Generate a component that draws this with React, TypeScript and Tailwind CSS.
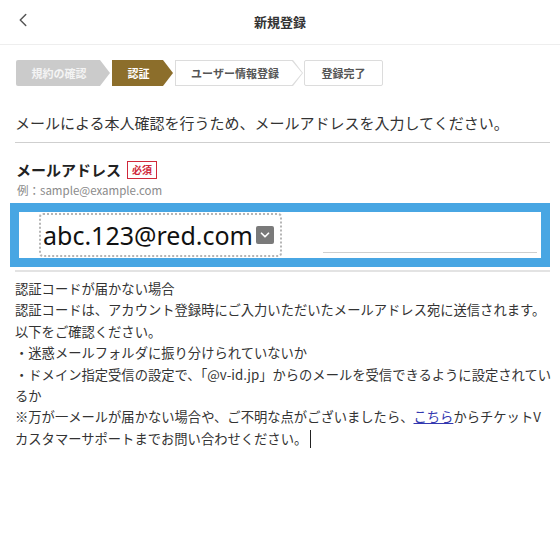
import { ChevronLeft, ChevronDown } from 'lucide-react';

const arrow = '[clip-path:polygon(0_0,calc(100%-10px)_0,100%_50%,calc(100%-10px)_100%,0_100%)]';

function Steps() {
  return (
    <div className="flex items-center px-[16px] pt-[15px] text-[11px] font-bold">
      {/* 規約の確認 */}
      <div className={`flex h-[26px] w-[94px] items-center justify-center pr-[8px] bg-[#cbcbcb] text-[#f4f4f4] rounded-l-[2px] ${arrow}`}>
        規約の確認
      </div>
      {/* 認証 (現在) */}
      <div className={`ml-[2px] flex h-[26px] w-[61px] items-center justify-center pr-[8px] bg-[#8c6e2b] text-white ${arrow}`}>
        認証
      </div>
      {/* ユーザー情報登録 */}
      <div className={`relative ml-[2px] h-[26px] w-[128px] bg-[#dcdcdc] ${arrow}`}>
        <div className={`absolute inset-px flex items-center justify-center pr-[8px] bg-white text-[#555] ${arrow}`}>
          ユーザー情報登録
        </div>
      </div>
      <div className="ml-px flex h-[26px] w-[79px] items-center justify-center rounded-[2px] border border-[#dcdcdc] bg-white text-[#555]">
        登録完了
      </div>
    </div>
  );
}

export default function App() {
  return (
    <div
      className="h-[560px] w-[560px] overflow-hidden bg-white text-[#222]"
      style={{ fontFamily: '"Noto Sans CJK JP", "Noto Sans", sans-serif' }}
    >
      {/* Header */}
      <header className="relative flex h-[45px] items-center justify-center border-b border-[#eeeeee]">
        <ChevronLeft className="absolute left-[12px] top-[9px] h-[22px] w-[22px] text-[#555]" strokeWidth={1.6} />
        <h1 className="text-[13px] font-bold text-[#333]">新規登録</h1>
      </header>

      <Steps />

      <p className="ml-[15px] mr-[10px] mt-[25px] border-b border-[#cfcfcf] pb-[7px] text-[15px] leading-[24px] text-[#333]">
        メールによる本人確認を行うため、メールアドレスを入力してください。
      </p>

      {/* メールアドレス */}
      <div className="mx-[16px] mt-[16px] flex items-center gap-[6px]">
        <span className="text-[15px] font-bold leading-[22px] text-[#222]">メールアドレス</span>
        <span className="flex h-[18px] items-center border border-[#d0283a] px-[4px] text-[10px] font-bold leading-none text-[#d0283a]">
          必須
        </span>
      </div>
      <div className="mx-[17px] mt-px text-[11.5px] leading-[16px] text-[#8a8a8a]">例：sample@example.com</div>

      <div className="mx-[10px] mt-[5px] flex h-[64px] border-[9px] border-[#48a6e3] bg-white">
        <div className="flex flex-1 items-stretch pl-[20px] pr-[4px]">
          <div className="my-px flex items-center gap-[3px] rounded-[4px] border-2 border-dotted border-[#b5b5b5] pl-[2px] pr-[6px]">
            <span className="text-[25px] leading-none text-[#111]" style={{ fontFamily: '"Noto Sans", sans-serif' }}>
              abc.123@red.com
            </span>
            <span className="flex h-[18px] w-[18px] items-center justify-center rounded-[2px] bg-[#7a7a7a]">
              <ChevronDown className="h-[14px] w-[14px] text-white" strokeWidth={3} />
            </span>
          </div>
          <div className="mb-[5px] ml-auto h-px w-[214px] self-end bg-[#cfcfcf]" />
        </div>
      </div>

      <div className="ml-[15px] mr-[10px] mt-[3px] whitespace-nowrap border-t-2 border-[#e3e3e3] pt-[6px] text-[13.3px] leading-[21.4px] text-[#333]">
        <div>認証コードが届かない場合</div>
        <div>認証コードは、アカウント登録時にご入力いただいたメールアドレス宛に送信されます。</div>
        <div>以下をご確認ください。</div>
        <div>・迷惑メールフォルダに振り分けられていないか</div>
        <div>・ドメイン指定受信の設定で、「@v-id.jp」からのメールを受信できるように設定されてい</div>
        <div>るか</div>
        <div>
          ※万が一メールが届かない場合や、ご不明な点がございましたら、
          <a href="#" className="text-[#3338b0] underline">こちら</a>
          からチケットV
        </div>
        <div className="flex items-center">
          カスタマーサポートまでお問い合わせください。
          <span className="ml-[3px] inline-block h-[18px] w-px bg-[#222]" />
        </div>
      </div>
    </div>
  );
}
